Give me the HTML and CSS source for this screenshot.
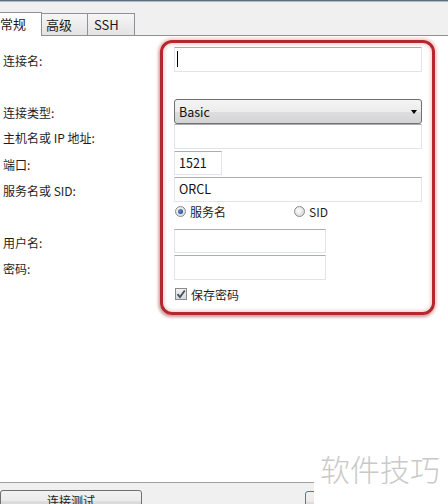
FILE: index.html
```html
<!DOCTYPE html>
<html lang="zh-CN">
<head>
<meta charset="utf-8">
<title>连接</title>
<link rel="stylesheet" href="styles.css">
</head>
<body>
<div class="window">
  <div class="topline"></div>
  <div class="tabbar">
    <div class="tab active">常规</div>
    <div class="tab t2">高级</div>
    <div class="tab t3">SSH</div>
  </div>
  <div class="panel">
    <div class="form">
      <div class="row r-name">
        <span class="label">连接名:</span>
        <div class="input wide"><span class="caret"></span></div>
      </div>
      <div class="row r-type">
        <span class="label">连接类型:</span>
        <div class="select wide"><span>Basic</span><span class="arrow"></span></div>
      </div>
      <div class="row">
        <span class="label">主机名或 IP 地址:</span>
        <div class="input wide"></div>
      </div>
      <div class="row r-gap2 r-h24">
        <span class="label">端口:</span>
        <div class="input port">1521</div>
      </div>
      <div class="row r-gap2">
        <span class="label">服务名或 SID:</span>
        <div class="input wide">ORCL</div>
      </div>
      <div class="radios">
        <span class="radio-item first"><span class="radio on"></span>服务名</span>
        <span class="radio-item"><span class="radio"></span>SID</span>
      </div>
      <div class="row r-user r-h24">
        <span class="label">用户名:</span>
        <div class="input mid"></div>
      </div>
      <div class="row r-gap2">
        <span class="label">密码:</span>
        <div class="input mid"></div>
      </div>
      <div class="checkrow">
        <span class="checkbox"><svg width="10" height="10" viewBox="0 0 10 10"><path d="M1.5 5.2 L4 8 L8.8 1.5" fill="none" stroke="#3d4f66" stroke-width="1.8"/></svg></span>保存密码
      </div>
    </div>
  </div>
  <div class="footer">
    <div class="btn test">连接测试</div>
    <div class="btn other"></div>
  </div>
  <div class="highlight"></div>
  <div class="watermark">软件技巧</div>
</div>
</body>
</html>
```

FILE: styles.css
```css
* { box-sizing: border-box; }
html, body { margin: 0; padding: 0; }
body {
  width: 448px;
  height: 504px;
  overflow: hidden;
  background: #fff;
  font-family: "Noto Sans CJK SC", "Liberation Sans", sans-serif;
  font-size: 12px;
  color: #1e1e1e;
}
.window { position: relative; width: 448px; height: 504px; }
.topline {
  height: 2px;
  background: linear-gradient(#5f6e7e 0, #5f6e7e 1px, #aeb8c2 1px);
}
.tabbar {
  height: 34px;
  background: #f0f0f0;
  border-bottom: 1px solid #8e9197;
  display: flex;
  align-items: flex-end;
}
.tab {
  height: 22px;
  border-top: 1px solid #8e9197;
  border-right: 1px solid #8e9197;
  background: linear-gradient(#f6f6f6, #e3e3e3);
  font-size: 13px;
  line-height: 20px;
  padding-left: 5px;
  color: #1a1a1a;
}
.tab.active {
  width: 42px;
  height: 24px;
  margin-bottom: -1px;
  background: #fff;
  padding-left: 0;
  line-height: 21px;
}
.tab.t2 { width: 46px; padding-left: 4px; line-height: 22px; }
.tab.t3 { width: 47px; padding-left: 6px; line-height: 22px; }
.panel {
  height: 446px;
  background: #fff;
}
.form { padding-top: 11px; }
.row {
  display: flex;
  align-items: center;
  height: 25px;
}
.r-h24 { height: 24px; }
.r-type { margin-top: 27px; }
.r-gap2 { margin-top: 2px; }
.r-user { margin-top: 9px; }
.label {
  width: 174px;
  padding-left: 3px;
  padding-top: 2px;
  white-space: nowrap;
}
.input {
  height: 100%;
  border: 1px solid #e1e4ea;
  border-top-color: #abadb3;
  background: #fff;
  padding-left: 4px;
  line-height: 22px;
  font-size: 12.5px;
  color: #111;
  position: relative;
}
.wide { width: 248px; }
.port { width: 48px; }
.mid { width: 152px; }
.caret {
  position: absolute;
  left: 2px;
  top: 3px;
  width: 1px;
  height: 16px;
  background: #000;
}
.select {
  height: 100%;
  border: 1px solid #707070;
  border-radius: 3px;
  background: linear-gradient(#f4f4f4 0%, #ececec 50%, #dedede 51%, #d4d4d4 100%);
  display: flex;
  align-items: center;
  justify-content: space-between;
  padding: 0 4px 0 4px;
  font-size: 12.5px;
  color: #111;
}
.arrow {
  width: 0;
  height: 0;
  border-left: 3.5px solid transparent;
  border-right: 3.5px solid transparent;
  border-top: 4px solid #000;
  margin-right: 0;
}
.radios {
  display: flex;
  align-items: center;
  height: 18px;
  padding-left: 175px;
}
.radio-item { display: flex; align-items: center; gap: 4px; }
.radio-item.first { width: 119px; }
.radio {
  width: 11px;
  height: 11px;
  border-radius: 50%;
  border: 1px solid #8a8a8a;
  background: radial-gradient(circle at 40% 40%, #ffffff 0%, #dcdcdc 70%, #c8c8c8 100%);
  position: relative;
}
.radio.on::after {
  content: "";
  position: absolute;
  left: 2px;
  top: 2px;
  width: 5px;
  height: 5px;
  border-radius: 50%;
  background: radial-gradient(circle at 35% 35%, #5d8ad0, #1d3f7a);
}
.checkrow {
  display: flex;
  align-items: center;
  gap: 4px;
  margin-top: 8px;
  height: 12px;
  padding-left: 175px;
  font-size: 12px;
}
.checkbox {
  width: 12px;
  height: 12px;
  border: 1px solid #8a8a8a;
  background: linear-gradient(#f2f2f2, #d8d8d8);
  display: flex;
  align-items: center;
  justify-content: center;
}
.footer {
  height: 22px;
  border-top: 1px solid #a0a0a0;
  background: #f0f0f0;
  padding-top: 7px;
  display: flex;
  position: relative;
}
.btn {
  height: 22px;
  border: 1px solid #707070;
  border-radius: 3px;
  background: linear-gradient(#f2f2f2 0%, #ebebeb 50%, #dddddd 51%, #cfcfcf 100%);
  text-align: center;
  line-height: 20px;
  font-size: 12px;
}
.btn.test { width: 142px; }
.btn.other { width: 40px; margin-left: 163px; margin-top: 1px; border-color: #3c7fb1; }
.highlight {
  position: absolute;
  left: 160px;
  top: 40px;
  width: 275px;
  height: 275px;
  border: 3px solid #b2282d;
  border-radius: 12px;
  box-shadow: 0 0 3px 2px rgba(220, 110, 110, 0.35), inset 0 0 3px 2px rgba(230, 140, 140, 0.35), -1px 2px 3px rgba(80, 20, 20, 0.3);
  pointer-events: none;
}
.watermark {
  position: absolute;
  left: 314px;
  top: 444px;
  width: 134px;
  height: 60px;
  background: #fff;
  color: #c9c9c9;
  font-size: 30px;
  line-height: 30px;
  padding: 9px 0 0 6px;
  font-family: "Noto Sans CJK SC", sans-serif;
  font-weight: 300;
}
```
